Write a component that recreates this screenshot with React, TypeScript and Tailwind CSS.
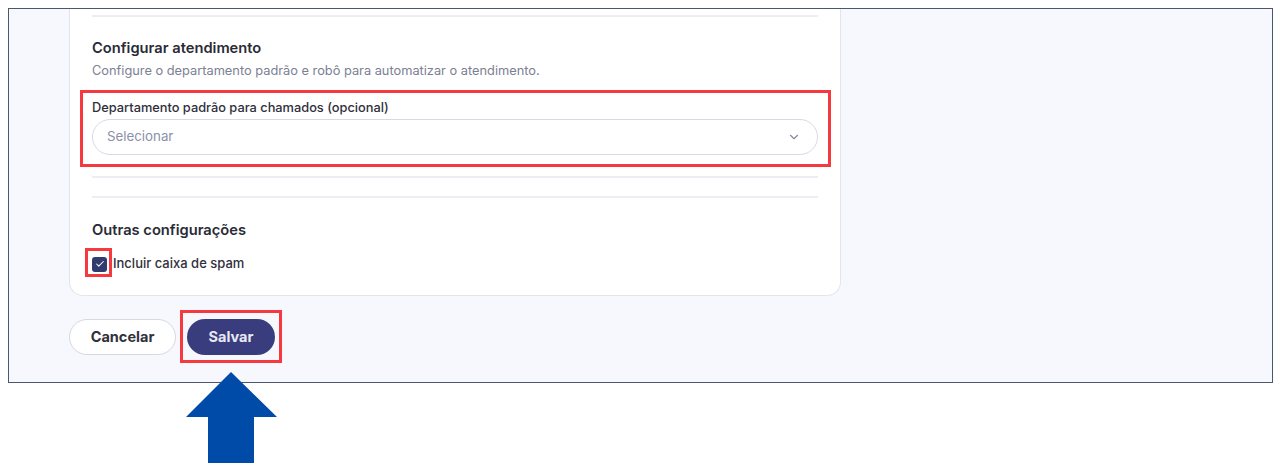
import { ChevronDown, Check } from 'lucide-react'

function Divider({ className = '' }: { className?: string }) {
  return <div className={`h-[2px] bg-[#eceef3] ${className}`} />
}

export default function App() {
  return (
    <div className="relative w-[1281px] h-[468px] bg-white pt-2 pl-2 font-['Inter','Noto_Sans',sans-serif] overflow-hidden">
      {/* Screenshot frame */}
      <div className="w-[1265px] h-[375px] border border-[#4b5670] bg-[#f7f8fd] pl-[60px] flex flex-col">
        {/* Card (top clipped) */}
        <div className="w-[772px] bg-white border-x border-b border-[#e3e5ec] rounded-b-[14px] px-[22px] pt-[6px] pb-[21px]">
          <Divider />

          <h3 className="mt-[21px] text-[14.7px] leading-5 font-semibold text-[#2a2b36]">Configurar atendimento</h3>
          <p className="mt-[4px] text-[12.8px] leading-[18px] text-[#7b8094]">
            Configure o departamento padrão e robô para automatizar o atendimento.
          </p>

          {/* Default department */}
          <div className="relative mt-[19px]">
            <label className="block text-[12.8px] leading-[18px] font-medium text-[#2f303b]">
              Departamento padrão para chamados (opcional)
            </label>
            <button className="mt-[2px] w-full h-9 rounded-full border border-[#d8dae3] bg-white pl-[14px] pr-[16px] flex items-center justify-between">
              <span className="text-[13.3px] text-[#8b90a8]">Selecionar</span>
              <ChevronDown className="w-[14px] h-[14px] text-[#858aa0]" strokeWidth={2} />
            </button>
            <div className="absolute -left-3 -right-[13px] -top-[9px] -bottom-3 border-[3px] border-[#f6393f] pointer-events-none" />
          </div>

          <Divider className="mt-[21px]" />
          <Divider className="mt-[18px]" />

          <h3 className="mt-[22px] text-[14.7px] leading-5 font-semibold text-[#2a2b36]">Outras configurações</h3>
          <div className="mt-[14px] h-5 flex items-center gap-1.5">
            <span className="relative">
              <span className="w-[15px] h-[15px] rounded-[3px] bg-[#2f3c6d] flex items-center justify-center">
                <Check className="w-[10px] h-[10px] text-white" strokeWidth={2.5} />
              </span>
              <span className="absolute -left-[7px] -right-[5px] -top-[9px] -bottom-[5px] border-[3px] border-[#f6393f]" />
            </span>
            <span className="text-[13px] font-medium text-[#2f303b]">Incluir caixa de spam</span>
          </div>
        </div>

        {/* Actions */}
        <div className="mt-[23px] flex items-center gap-[11px]">
          <button className="w-[107px] h-9 rounded-full border border-[#d6d8e0] bg-white text-[14.5px] font-bold text-[#30313a]">
            Cancelar
          </button>
          <span className="relative">
            <button className="w-[88px] h-9 rounded-full bg-[#3a3d7d] text-[14.5px] font-bold text-[#e9e9f5]">
              Salvar
            </button>
            <span className="absolute -left-[7px] -right-[7px] -top-[9px] -bottom-[8px] border-[3px] border-[#f6393f]" />
          </span>
        </div>
      </div>

      {/* Annotation arrow */}
      <svg className="absolute left-[186px] top-[372px]" width="91" height="92" viewBox="0 0 91 92">
        <polygon points="45,0 0,45 22,45 22,91 68,91 68,45 91,45" fill="#004aa8" />
      </svg>
    </div>
  )
}
